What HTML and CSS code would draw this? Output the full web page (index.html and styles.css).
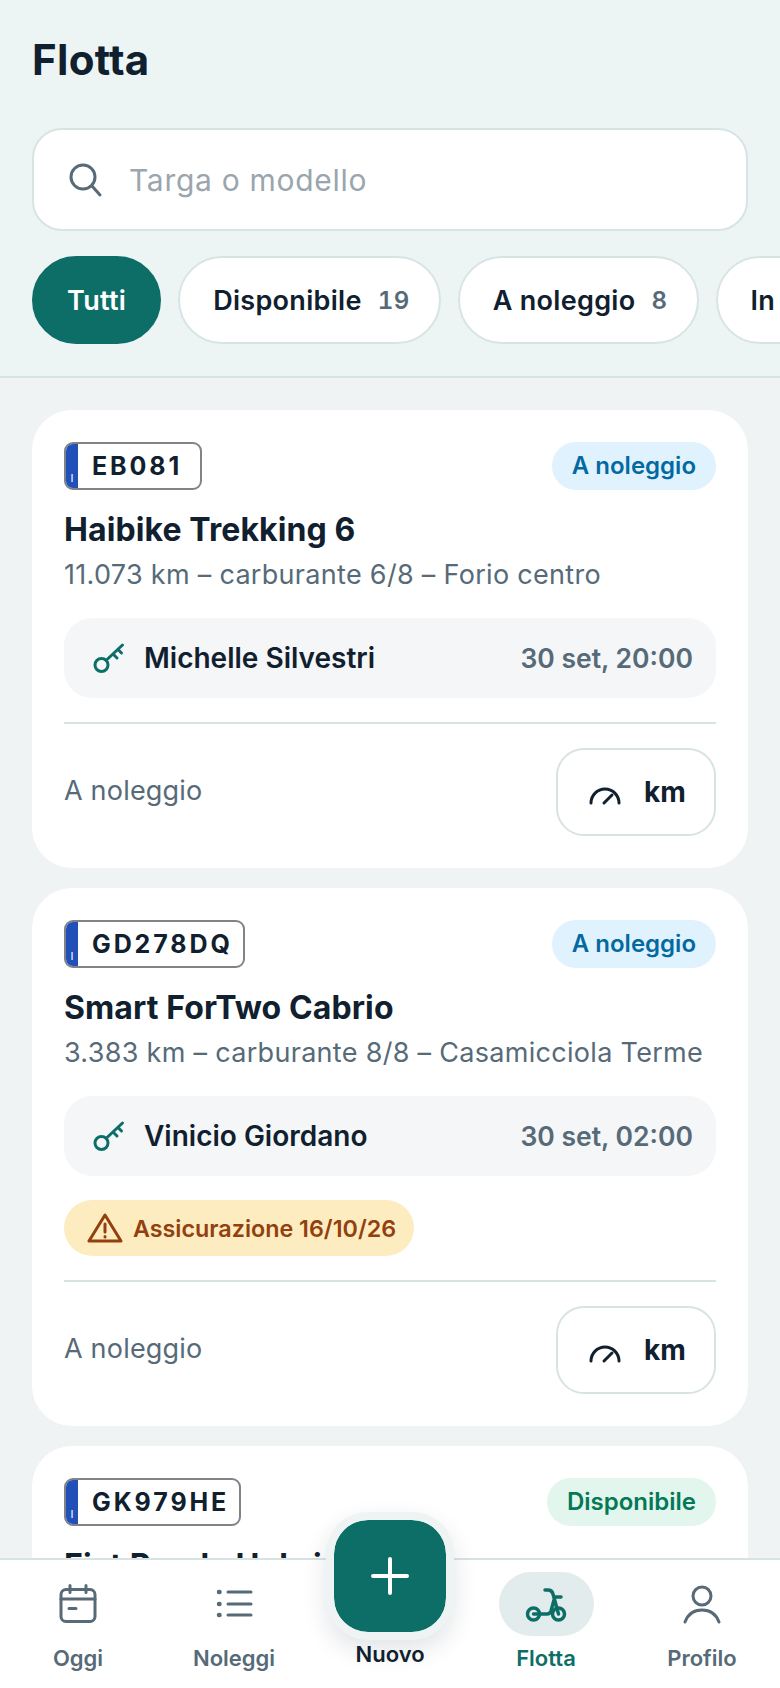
FILE: index.html
```html
<!DOCTYPE html>
<html lang="it">

    <head>
        <meta charset="UTF-8">
        <meta name="viewport" content="width=device-width, initial-scale=1.0">
        <title>Flotta</title>
        <link rel="stylesheet" href="styles.css">
    </head>

    <body>

        <div class="app">
            <header class="top">
                <h1 class="title">Flotta</h1>
                <div class="search">
                    <svg class="search-icon" viewBox="0 0 36 36" fill="none" stroke="#566a78" stroke-width="3" stroke-linecap="round">
                        <circle cx="15" cy="15" r="12"/>
                        <path d="M24 24l8 9"/>
                    </svg>
                    <span class="placeholder">Targa o modello</span>
                </div>
                <div class="chips">
                    <div class="chip active">Tutti</div>
                    <div class="chip">Disponibile <span class="count">19</span></div>
                    <div class="chip">A noleggio <span class="count">8</span></div>
                    <div class="chip">In manutenzione <span class="count">3</span></div>
                </div>
            </header>

            <main class="list">
                <div class="card">
                    <div class="card-top">
                        <div class="plate"><span class="plate-eu">I</span><span class="plate-num">EB081</span></div>
                        <span class="badge rented">A noleggio</span>
                    </div>
                    <h2 class="name">Haibike Trekking 6</h2>
                    <p class="meta">11.073 km – carburante 6/8 – Forio centro</p>
                    <div class="rental">
                        <svg class="key" viewBox="0 0 32 32" fill="none" stroke="#0d6e68" stroke-width="3" stroke-linecap="round">
                            <circle cx="8.500" cy="23" r="6.500"/>
                            <path d="M13.500 18L29.500 3M20 12l4 4M25 7.500l3.500 3.500"/>
                        </svg>
                        <span class="driver">Michelle Silvestri</span>
                        <span class="when">30 set, 20:00</span>
                    </div>
                    <div class="card-foot">
                        <span class="state">A noleggio</span>
                        <div class="km">
                            <svg class="gauge" viewBox="0 0 32 20" fill="none" stroke="#10202e" stroke-width="3" stroke-linecap="round">
                                <path d="M2 17a14 14 0 0 1 28 0M15 17l8-8"/>
                            </svg>
                            km
                        </div>
                    </div>
                </div>

                <div class="card">
                    <div class="card-top">
                        <div class="plate"><span class="plate-eu">I</span><span class="plate-num">GD278DQ</span></div>
                        <span class="badge rented">A noleggio</span>
                    </div>
                    <h2 class="name">Smart ForTwo Cabrio</h2>
                    <p class="meta">3.383 km – carburante 8/8 – Casamicciola Terme</p>
                    <div class="rental">
                        <svg class="key" viewBox="0 0 32 32" fill="none" stroke="#0d6e68" stroke-width="3" stroke-linecap="round">
                            <circle cx="8.500" cy="23" r="6.500"/>
                            <path d="M13.500 18L29.500 3M20 12l4 4M25 7.500l3.500 3.500"/>
                        </svg>
                        <span class="driver">Vinicio Giordano</span>
                        <span class="when">30 set, 02:00</span>
                    </div>
                    <div class="alert">
                        <svg class="warn" viewBox="0 0 36 30" fill="none" stroke="#92400e" stroke-width="3" stroke-linejoin="round" stroke-linecap="round">
                            <path d="M18 2L2 28h32z"/>
                            <path d="M18 11v8M18 23.500v.5"/>
                        </svg>
                        Assicurazione 16/10/26
                    </div>
                    <div class="card-foot">
                        <span class="state">A noleggio</span>
                        <div class="km">
                            <svg class="gauge" viewBox="0 0 32 20" fill="none" stroke="#10202e" stroke-width="3" stroke-linecap="round">
                                <path d="M2 17a14 14 0 0 1 28 0M15 17l8-8"/>
                            </svg>
                            km
                        </div>
                    </div>
                </div>

                <div class="card">
                    <div class="card-top">
                        <div class="plate"><span class="plate-eu">I</span><span class="plate-num">GK979HE</span></div>
                        <span class="badge free">Disponibile</span>
                    </div>
                    <h2 class="name">Fiat Panda Hybrid</h2>
                </div>
            </main>

            <nav class="nav">
                <div class="nav-item">
                    <div class="nav-icon">
                        <svg width="44" height="44" viewBox="0 0 44 44" fill="none" stroke="#566a78" stroke-width="3" stroke-linecap="round" stroke-linejoin="round">
                            <rect x="5" y="7.500" width="34" height="32" rx="5"/>
                            <path d="M5 17h34M14 3.500v7M30 3.500v7M13 26.500h7"/>
                        </svg>
                    </div>
                    <span>Oggi</span>
                </div>
                <div class="nav-item">
                    <div class="nav-icon">
                        <svg width="44" height="44" viewBox="0 0 44 44" fill="none" stroke="#566a78" stroke-width="3" stroke-linecap="round">
                            <path d="M16 10h23M16 22h23M16 33h23"/>
                            <path d="M7 10h.5M7 22h.5M7 33h.5" stroke-width="4.500"/>
                        </svg>
                    </div>
                    <span>Noleggi</span>
                </div>
                <div class="nav-item new">
                    <div class="fab">
                        <svg width="44" height="44" viewBox="0 0 44 44" fill="none" stroke="#fff" stroke-width="4" stroke-linecap="round">
                            <path d="M22 5v34M5 22h34"/>
                        </svg>
                    </div>
                    <span>Nuovo</span>
                </div>
                <div class="nav-item current">
                    <div class="nav-icon">
                        <svg width="44" height="44" viewBox="0 0 44 44" fill="none" stroke="#0d6e68" stroke-width="3.500" stroke-linecap="round" stroke-linejoin="round">
                            <circle cx="9.500" cy="32" r="6"/>
                            <circle cx="34.500" cy="32" r="6"/>
                            <path d="M21 8h3q4 0 5 4l5.500 20M9.500 32H23q3 0 4-3l3-11M30 15h7"/>
                        </svg>
                    </div>
                    <span>Flotta</span>
                </div>
                <div class="nav-item">
                    <div class="nav-icon">
                        <svg width="44" height="44" viewBox="0 0 44 44" fill="none" stroke="#566a78" stroke-width="3" stroke-linecap="round">
                            <circle cx="22" cy="14" r="9"/>
                            <path d="M5 40c3-8 9-12 17-12s14 4 17 12"/>
                        </svg>
                    </div>
                    <span>Profilo</span>
                </div>
            </nav>
        </div>

    </body>

</html>
```

FILE: styles.css
```css
:root {
    --head: #ecf4f4;
    --bg: #eff3f4;
    --line: #d8e4e4;
    --ink: #10202e;
    --dull: #566a78;
    --teal: #0d6e68;
}

* {
    box-sizing: border-box;
}

body {
    margin: 0;
    background-color: var(--bg);
    font-family: 'Inter', 'Liberation Sans', sans-serif;
    color: var(--ink);
}

.app {
    height: 1688px;
    display: flex;
    flex-direction: column;
    overflow: hidden;
}

.top {
    height: 378px;
    flex-shrink: 0;
    padding: 36px 0 0 32px;
    background: var(--head);
    border-bottom: 2px solid var(--line);
}

.title {
    margin: 0;
    height: 48px;
    font-size: 42px;
    line-height: 48px;
    font-weight: 700;
    letter-spacing: 0.3px;
}

.search {
    margin-top: 44px;
    width: 716px;
    height: 103px;
    display: flex;
    align-items: center;
    padding-left: 34px;
    background: #fff;
    border: 2px solid var(--line);
    border-radius: 30px;
}

.search-icon {
    width: 36px;
    height: 36px;
}

.placeholder {
    margin-left: 25px;
    font-size: 30px;
    letter-spacing: 0.7px;
    color: #9aa5ae;
}

.chips {
    margin-top: 25px;
    display: flex;
    gap: 17px;
    white-space: nowrap;
}

.chip {
    height: 88px;
    flex-shrink: 0;
    display: flex;
    align-items: center;
    gap: 16px;
    padding: 0 29px 0 33px;
    background: #fff;
    border: 2px solid var(--line);
    border-radius: 44px;
    font-size: 27px;
    font-weight: 600;
    letter-spacing: 0.3px;
}

.chip.active {
    padding: 0 33px;
    background: var(--teal);
    border-color: var(--teal);
    color: #fff;
}

.count {
    font-size: 24px;
    letter-spacing: 0.5px;
    font-variant-numeric: tabular-nums;
    color: var(--dull);
}

.list {
    flex: 1;
    min-height: 0;
    overflow: hidden;
    padding: 32px 32px 0;
    display: flex;
    flex-direction: column;
    gap: 20px;
}

.card {
    flex-shrink: 0;
    padding: 32px;
    background: #fff;
    border-radius: 40px;
}

.card-top {
    display: flex;
    justify-content: space-between;
    align-items: center;
}

.plate {
    min-width: 138px;
    height: 48px;
    display: flex;
    background: #fff;
    border: 2px solid #808488;
    border-radius: 9px;
    overflow: hidden;
}

.plate-eu {
    width: 12px;
    background: #2050b8;
    color: #fff;
    font-size: 11px;
    line-height: 14px;
    padding-top: 27px;
    text-align: center;
}

.plate-num {
    padding: 0 10px 0 14px;
    font-size: 25px;
    line-height: 44px;
    font-weight: 700;
    letter-spacing: 2.9px;
}

.badge {
    height: 48px;
    padding: 0 20px;
    border-radius: 24px;
    font-size: 24px;
    line-height: 48px;
    font-weight: 600;
}

.badge.rented {
    background: #e0f2fe;
    color: #0369a1;
}

.badge.free {
    background: #e2f6ee;
    color: #047857;
}

.name {
    margin: 20px 0 0;
    font-size: 32px;
    line-height: 40px;
    font-weight: 700;
    letter-spacing: 0.1px;
}

.meta {
    margin: 7px 0 0;
    font-size: 27px;
    line-height: 36px;
    letter-spacing: 0.3px;
    white-space: nowrap;
    color: var(--dull);
}

.rental {
    margin-top: 25px;
    height: 80px;
    display: flex;
    align-items: center;
    padding: 0 23px 0 29px;
    background: #f4f6f8;
    border-radius: 28px;
}

.key {
    width: 32px;
    height: 32px;
}

.driver {
    margin-left: 19px;
    font-size: 28px;
    font-weight: 600;
}

.when {
    margin-left: auto;
    font-size: 26.500px;
    font-weight: 600;
    color: var(--dull);
}

.alert {
    margin-top: 24px;
    width: 350px;
    height: 56px;
    display: flex;
    align-items: center;
    gap: 10px;
    padding-left: 23px;
    background: #fdecc0;
    border-radius: 28px;
    color: #92400e;
    font-size: 23.300px;
    font-weight: 600;
    white-space: nowrap;
}

.warn {
    width: 36px;
    height: 30px;
}

.card-foot {
    margin-top: 24px;
    padding-top: 24px;
    border-top: 2px solid var(--line);
    display: flex;
    justify-content: space-between;
    align-items: center;
}

.state {
    padding-bottom: 3px;
    font-size: 27px;
    letter-spacing: 0.2px;
    color: var(--dull);
}

.km {
    width: 160px;
    height: 88px;
    display: flex;
    align-items: center;
    justify-content: center;
    gap: 23px;
    padding-left: 3px;
    border: 2px solid var(--line);
    border-radius: 28px;
    font-size: 28px;
    font-weight: 700;
}

.gauge {
    width: 32px;
    height: 20px;
    margin-top: 8px;
}

.nav {
    height: 130px;
    flex-shrink: 0;
    display: grid;
    grid-template-columns: repeat(5, 1fr);
    background: #fff;
    border-top: 2px solid var(--line);
    position: relative;
}

.nav-item {
    display: flex;
    flex-direction: column;
    align-items: center;
    padding-top: 12px;
    font-size: 22px;
    font-weight: 600;
    color: var(--dull);
}

.nav-icon {
    width: 95px;
    height: 64px;
    display: flex;
    align-items: center;
    justify-content: center;
    border-radius: 32px;
}

.nav-item span {
    margin-top: 7px;
    line-height: 30px;
}

.current {
    color: var(--teal);
}

.current .nav-icon {
    background: #e3ecec;
}

.new {
    color: var(--ink);
    padding-top: 0;
}

.fab {
    width: 128px;
    height: 128px;
    flex-shrink: 0;
    margin-top: -48px;
    display: flex;
    align-items: center;
    justify-content: center;
    background: var(--teal);
    background-clip: padding-box;
    border: 8px solid #eef3f3;
    border-radius: 42px;
    box-shadow: 0 10px 24px rgba(16, 32, 46, 0.12);
}

.new span {
    margin-top: -1px;
}
```
